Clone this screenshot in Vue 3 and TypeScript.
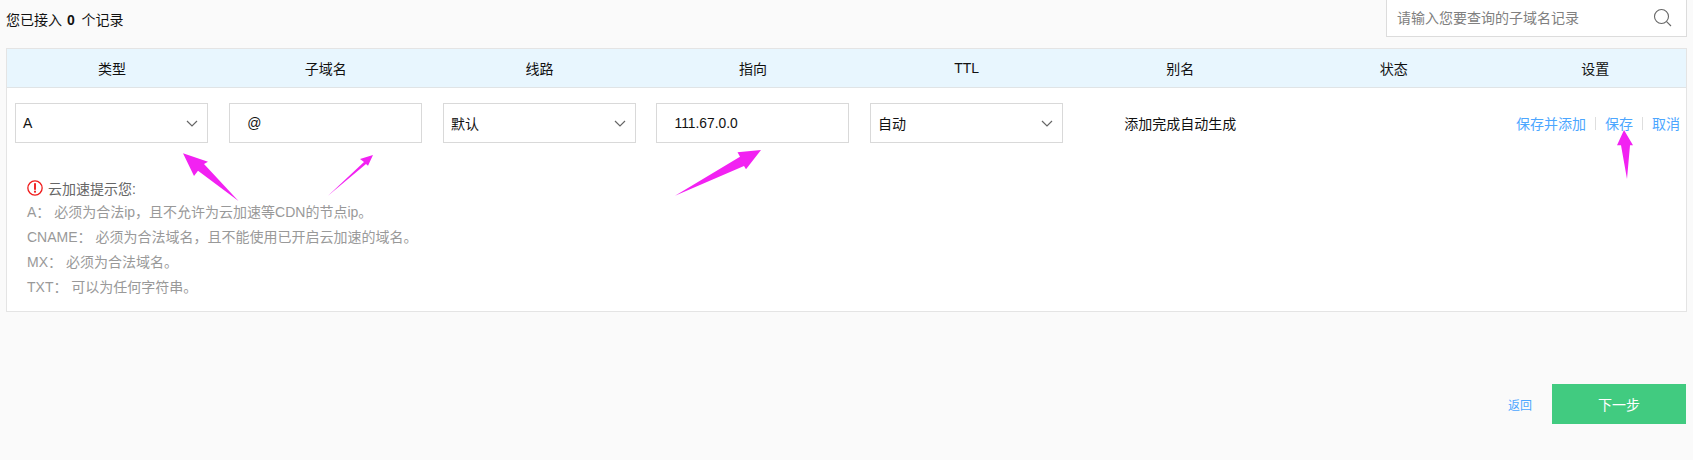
<template>
  <main class="page">
    <div class="top">
      <p class="count">您已接入 <strong>0</strong> 个记录</p>
      <div class="search">
        <span class="placeholder">请输入您要查询的子域名记录</span>
        <svg class="search-icon" width="20" height="20" viewBox="0 0 20 20">
          <circle cx="8.5" cy="8.5" r="7" fill="none" stroke="#666" stroke-width="1.1" />
          <path d="M13.6 13.6 L18 18" stroke="#666" stroke-width="1.1" />
        </svg>
      </div>
    </div>

    <section class="table">
      <div class="grid head">
        <div v-for="col in columns" :key="col">{{ col }}</div>
      </div>

      <div class="grid row">
        <div class="cell first">
          <div class="field select">A<svg width="12" height="7" viewBox="0 0 12 7"><path d="M1 1 L6 6 L11 1" fill="none" stroke="#666" stroke-width="1.2" /></svg></div>
        </div>
        <div class="cell">
          <div class="field input">@</div>
        </div>
        <div class="cell">
          <div class="field select">默认<svg width="12" height="7" viewBox="0 0 12 7"><path d="M1 1 L6 6 L11 1" fill="none" stroke="#666" stroke-width="1.2" /></svg></div>
        </div>
        <div class="cell">
          <div class="field input ip">111.67.0.0</div>
        </div>
        <div class="cell">
          <div class="field select">自动<svg width="12" height="7" viewBox="0 0 12 7"><path d="M1 1 L6 6 L11 1" fill="none" stroke="#666" stroke-width="1.2" /></svg></div>
        </div>
        <div class="cell">添加完成自动生成</div>
        <div class="cell"></div>
        <div class="cell actions">
          <a>保存并添加</a>
          <i></i>
          <a>保存</a>
          <i></i>
          <a>取消</a>
        </div>
      </div>

      <div class="tips">
        <div class="tips-title">
          <svg width="16" height="16" viewBox="0 0 17 17">
            <circle cx="8.5" cy="8.5" r="7.6" fill="none" stroke="#f01c1c" stroke-width="1.4" />
            <rect x="7.5" y="3.4" width="2" height="7" fill="#f01c1c" />
            <rect x="7.5" y="11.4" width="2" height="2" fill="#f01c1c" />
          </svg>
          云加速提示您:
        </div>
        <p v-for="tip in tips" :key="tip">{{ tip }}</p>
      </div>
    </section>

    <div class="foot">
      <a class="back">返回</a>
      <button class="next" type="button">下一步</button>
    </div>

    <svg class="marks" width="1693" height="460" viewBox="0 0 1693 460">
      <polygon v-for="arrow in arrows" :key="arrow" :points="arrow" fill="#f222f2" />
    </svg>
  </main>
</template>

<script setup lang="ts">
const columns = ['类型', '子域名', '线路', '指向', 'TTL', '别名', '状态', '设置'];

const tips = [
  'A： 必须为合法ip，且不允许为云加速等CDN的节点ip。',
  'CNAME： 必须为合法域名，且不能使用已开启云加速的域名。',
  'MX： 必须为合法域名。',
  'TXT： 可以为任何字符串。',
];

// hand-drawn annotation arrows on top of the screenshot
const arrows = [
  '183,153.3 208,161.7 204,164 238.5,201 198,170.7 194,176',
  '373,155 360,159 364,162 328,195.7 366,164 368,165.7',
  '761,150 737.5,152.3 740,156.7 675,195.7 744,166 746,169.3',
  '1624,130 1617,145.3 1621,145.3 1627,179 1630,145.3 1633,145.3',
];
</script>

<style>
html,
body {
  background: #fafafa;
}
</style>

<style scoped>
.page {
  position: relative;
  height: 460px;
  padding: 0 6px;
  box-sizing: border-box;
  overflow: hidden;
  font-family: "Liberation Sans", "Noto Sans CJK SC", sans-serif;
  font-size: 14px;
  color: #111;
  background: #fafafa;
}

.top {
  display: flex;
  justify-content: space-between;
  align-items: center;
  height: 37px;
  margin-bottom: 11px;
}

.count {
  margin: 0;
}

.count strong {
  margin: 0 3px 0 1px;
}

.search {
  display: flex;
  justify-content: space-between;
  align-items: center;
  box-sizing: border-box;
  width: 301px;
  height: 37px;
  padding: 0 13px 2px 10px;
  background: #fff;
  border: 1px solid #dcdcdc;
  border-top: 0;
  color: #808080;
}

.search-icon {
  margin-top: 1px;
}

.table {
  box-sizing: border-box;
  height: 264px;
  background: #fff;
  border: 1px solid #e4e4e4;
}

.grid {
  display: grid;
  grid-template-columns: 212px repeat(6, 213.6px) 1fr;
}

.head {
  height: 38px;
  align-items: center;
  text-align: center;
  background: #e8f6fe;
  border-bottom: 1px solid #e0e4e6;
}

.head div:first-child {
  padding-right: 2px;
}

.head div:last-child {
  padding-left: 4px;
}

.row {
  padding-top: 15px;
  height: 40px;
}

.cell {
  display: flex;
  justify-content: center;
  align-items: center;
}

.first {
  padding-right: 3px;
}

.field {
  display: flex;
  align-items: center;
  justify-content: space-between;
  box-sizing: border-box;
  width: 193px;
  height: 40px;
  padding: 0 9px 0 7px;
  background: #fff;
  border: 1px solid #d9d9d9;
}

.input {
  padding-left: 17px;
}

.ip {
  font-size: 13.8px;
}

.actions {
  gap: 9px;
  justify-content: flex-end;
  padding-right: 6px;
}

.actions a {
  color: #4ca6ff;
}

.actions i {
  width: 1px;
  height: 13px;
  background: #dedede;
}

.tips {
  margin-top: 32px;
  padding-left: 20px;
  color: #999;
}

.tips-title {
  display: flex;
  align-items: center;
  gap: 5px;
  height: 25px;
  color: #666;
}

.tips p {
  margin: 0;
  line-height: 25px;
}

.foot {
  display: flex;
  justify-content: flex-end;
  align-items: center;
  gap: 20px;
  margin-top: 72px;
  padding-right: 1px;
}

.back {
  font-size: 12px;
  color: #4ca6ff;
}

.next {
  width: 134px;
  height: 40px;
  padding: 0;
  border: 0;
  font: inherit;
  color: #fff;
  background: #41cb80;
}

.marks {
  position: absolute;
  left: 0;
  top: 0;
  pointer-events: none;
}
</style>
